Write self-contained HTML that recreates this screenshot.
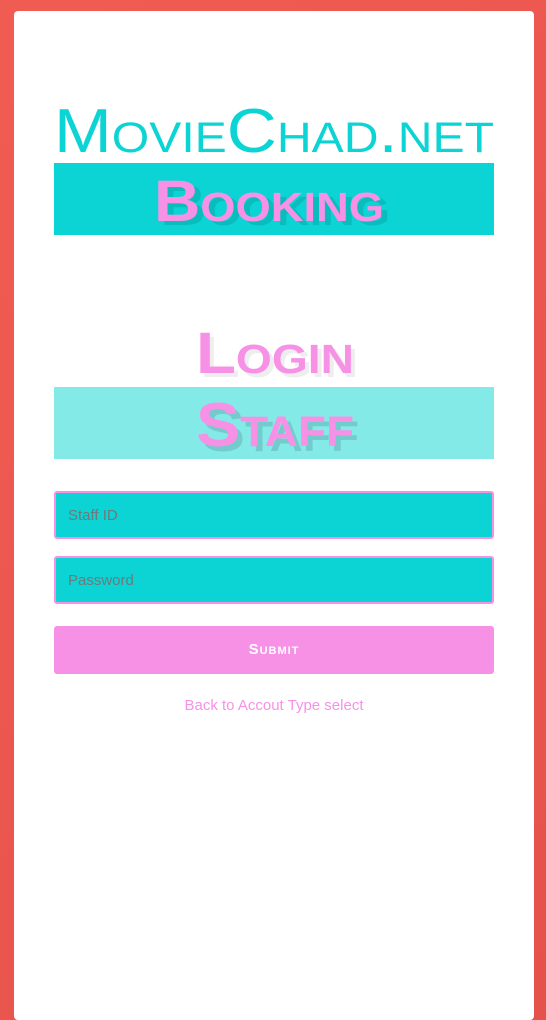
<!DOCTYPE html>
<html style="overflow:hidden;height:1020px"><head><style>
html,body{margin:0;padding:0}
body{width:546px;height:1020px;background:linear-gradient(135deg,#f4605a,#e5534c);position:relative;overflow:hidden;font-family:"Liberation Sans",sans-serif}
.card{position:absolute;left:14px;top:11px;width:520px;height:1009px;background:#fff;border-radius:4px}
.abs{position:absolute}
svg{display:block}
.inp{position:absolute;left:54px;height:44px;background:#0cd4d4;border:2px solid #f791e6;border-radius:3px;color:#6b7b7b;font-size:15px;line-height:46px;padding-left:12px;box-sizing:content-box;width:424px}
</style></head><body style="background:linear-gradient(135deg,#f15c52,#e5524b)">
<div class="card"></div>
<svg class="abs" style="left:0;top:0" width="546" height="1020">
  <text x="54" y="152" textLength="440" lengthAdjust="spacingAndGlyphs" font-family="Liberation Sans" font-size="62" fill="#0cd4d4" style="font-variant:small-caps">MovieChad.net</text>
  <rect x="54" y="163" width="440" height="72" fill="#0cd4d4"/>
  <text x="160" y="225" textLength="230" lengthAdjust="spacingAndGlyphs" font-family="Liberation Sans" font-weight="bold" font-size="58" fill="#0aa8a8" opacity="0.5" style="font-variant:small-caps">Booking</text>
  <text x="154" y="221" textLength="230" lengthAdjust="spacingAndGlyphs" font-family="Liberation Sans" font-weight="bold" font-size="58" fill="#f791e6" style="font-variant:small-caps">Booking</text>
  <text x="200" y="377" textLength="158" lengthAdjust="spacingAndGlyphs" font-family="Liberation Sans" font-weight="bold" font-size="58" fill="#eee" style="font-variant:small-caps">Login</text>
  <text x="196" y="373" textLength="158" lengthAdjust="spacingAndGlyphs" font-family="Liberation Sans" font-weight="bold" font-size="58" fill="#f791e6" style="font-variant:small-caps">Login</text>
  <rect x="54" y="387" width="440" height="72" fill="#84eae8"/>
  <text x="201" y="451" textLength="158" lengthAdjust="spacingAndGlyphs" font-family="Liberation Sans" font-weight="bold" font-size="62" fill="#6ab8b8" opacity="0.6" style="font-variant:small-caps">Staff</text>
  <text x="196" y="446" textLength="158" lengthAdjust="spacingAndGlyphs" font-family="Liberation Sans" font-weight="bold" font-size="62" fill="#f791e6" style="font-variant:small-caps">Staff</text>
</svg>
<div class="inp" style="top:491px">Staff ID</div>
<div class="inp" style="top:556px">Password</div>
<div class="abs" style="left:54px;top:626px;width:440px;height:48px;background:#f791e6;border-radius:3px;color:#fff;font-weight:bold;font-size:15px;line-height:48px;text-align:center;font-variant:small-caps;letter-spacing:1px">Submit</div>
<div class="abs" style="left:14px;width:520px;top:697px;text-align:center;color:#f791e6;font-size:15px">Back to Accout Type select</div>
</body></html>
